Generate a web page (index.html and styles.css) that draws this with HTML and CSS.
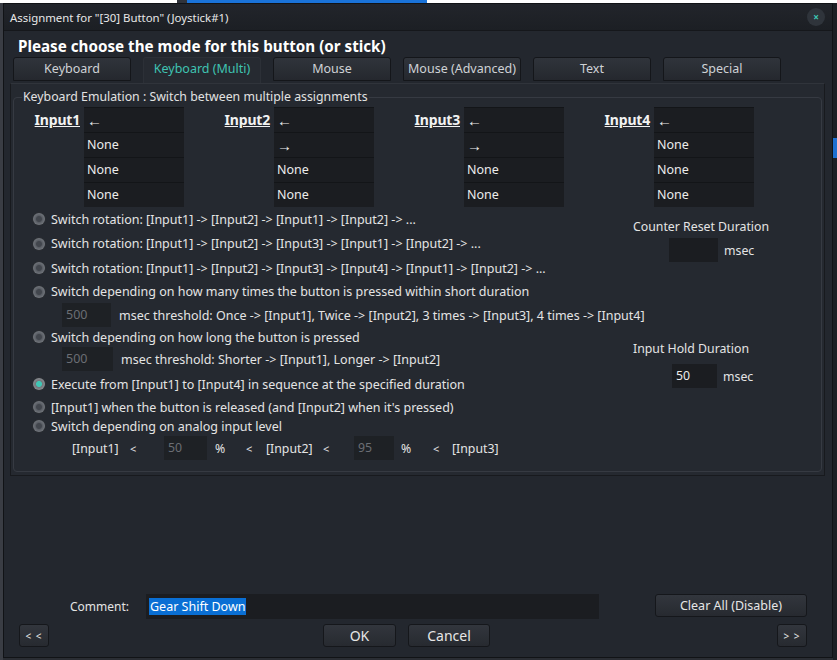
FILE: index.html
```html
<!DOCTYPE html>
<html>
<head>
<meta charset="utf-8">
<title>Assignment</title>
<link rel="stylesheet" href="styles.css">
</head>
<body>
<div class="desk">
  <div class="topstrip"><span class="ts-dark"></span><span class="ts-blue"></span></div>
  <div class="main">
    <div class="leftedge"></div>
    <div class="dialog">
      <div class="titlebar">
        <span class="title">Assignment for "[30] Button" (Joystick#1)</span>
        <span class="close">×</span>
      </div>
      <div class="content">
        <div class="heading">Please choose the mode for this button (or stick)</div>
        <div class="tabs">
          <div class="tab">Keyboard</div>
          <div class="tab active">Keyboard (Multi)</div>
          <div class="tab">Mouse</div>
          <div class="tab">Mouse (Advanced)</div>
          <div class="tab">Text</div>
          <div class="tab">Special</div>
        </div>
        <div class="panel">
          <fieldset class="group">
            <legend>Keyboard Emulation : Switch between multiple assignments</legend>
            <div class="inputs">
              <div class="icol">
                <div class="ilabel">Input1</div>
                <div class="cells"><div class="cell arrow">←</div><div class="cell">None</div><div class="cell">None</div><div class="cell">None</div></div>
              </div>
              <div class="icol">
                <div class="ilabel">Input2</div>
                <div class="cells"><div class="cell arrow">←</div><div class="cell arrow">→</div><div class="cell">None</div><div class="cell">None</div></div>
              </div>
              <div class="icol">
                <div class="ilabel">Input3</div>
                <div class="cells"><div class="cell arrow">←</div><div class="cell arrow">→</div><div class="cell">None</div><div class="cell">None</div></div>
              </div>
              <div class="icol">
                <div class="ilabel">Input4</div>
                <div class="cells"><div class="cell arrow">←</div><div class="cell">None</div><div class="cell">None</div><div class="cell">None</div></div>
              </div>
            </div>
            <div class="options">
              <div class="opt"><span class="radio"></span>Switch rotation: [Input1] -&gt; [Input2] -&gt; [Input1] -&gt; [Input2] -&gt; ...</div>
              <div class="opt"><span class="radio"></span>Switch rotation: [Input1] -&gt; [Input2] -&gt; [Input3] -&gt; [Input1] -&gt; [Input2] -&gt; ...</div>
              <div class="opt"><span class="radio"></span>Switch rotation: [Input1] -&gt; [Input2] -&gt; [Input3] -&gt; [Input4] -&gt; [Input1] -&gt; [Input2] -&gt; ...</div>
              <div class="opt"><span class="radio"></span>Switch depending on how many times the button is pressed within short duration</div>
              <div class="sub wide"><span class="field dis w49">500</span>msec threshold: Once -&gt; [Input1], Twice -&gt; [Input2], 3 times -&gt; [Input3], 4 times -&gt; [Input4]</div>
              <div class="opt"><span class="radio"></span>Switch depending on how long the button is pressed</div>
              <div class="sub"><span class="field dis w51">500</span>msec threshold: Shorter -&gt; [Input1], Longer -&gt; [Input2]</div>
              <div class="opt"><span class="radio on"></span>Execute from [Input1] to [Input4] in sequence at the specified duration</div>
              <div class="opt"><span class="radio"></span>[Input1] when the button is released (and [Input2] when it's pressed)</div>
              <div class="opt"><span class="radio"></span>Switch depending on analog input level</div>
              <div class="analog">
                <span>[Input1]</span><span class="lt">&lt;</span><span class="field dis">50</span><span class="pct">%</span><span class="lt">&lt;</span><span>[Input2]</span><span class="lt">&lt;</span><span class="field dis">95</span><span class="pct">%</span><span class="lt">&lt;</span><span>[Input3]</span>
              </div>
              <div class="side-block counter">
                <div class="slabel">Counter Reset Duration</div>
                <div class="srow"><span class="field w49 m36"></span><span>msec</span></div>
              </div>
              <div class="side-block hold">
                <div class="slabel">Input Hold Duration</div>
                <div class="srow"><span class="field w45 m39">50</span><span>msec</span></div>
              </div>
            </div>
          </fieldset>
        </div>
        <div class="comment-row">
          <span class="clabel">Comment:</span>
          <span class="field comment"><span class="sel">Gear Shift Down</span></span>
          <button class="btn clear">Clear All (Disable)</button>
        </div>
        <div class="button-row">
          <button class="btn nav">&lt; &lt;</button>
          <button class="btn ok">OK</button>
          <button class="btn cancel">Cancel</button>
          <button class="btn nav next">&gt; &gt;</button>
        </div>
      </div>
    </div>
    <div class="side"><div class="side-mark"></div></div>
  </div>
</div>
</body>
</html>
```

FILE: styles.css
```css
* { box-sizing: border-box; }
html, body { margin: 0; padding: 0; }
body {
  width: 837px;
  height: 660px;
  overflow: hidden;
  background: #2a2d33;
  font-family: "Noto Sans", "Open Sans", sans-serif;
  font-size: 12px;
  color: #e4e4e4;
}
.desk { display: flex; flex-direction: column; width: 837px; height: 660px; }
.topstrip { display: flex; height: 3px; background: #ffffff; flex: none; }
.ts-dark { width: 10px; margin-left: 177px; background: #30333a; }
.ts-blue { width: 240px; background: #1a73d9; }
.main { display: flex; flex: 1; min-height: 0; }
.leftedge { width: 3px; background: #3a3d44; flex: none; }
.dialog {
  width: 830px;
  height: 655px;
  flex: none;
  background: #23272e;
  border: 1px solid #111316;
  display: flex;
  flex-direction: column;
}
.side { flex: 1; background: #1c1f24; display: flex; flex-direction: column; }
.side-mark { height: 20px; margin-top: 135px; background: #1e6fd0; }

.titlebar {
  height: 27px;
  flex: none;
  display: flex;
  align-items: center;
  justify-content: space-between;
  background: linear-gradient(#22252b, #1c1f24);
  border-bottom: 1px solid #15171b;
  padding: 0 6px 0 6px;
}
.title { color: #e8e8e8; font-size: 11.4px; }
.close {
  width: 18px;
  height: 18px;
  border-radius: 50%;
  background: #2f343b;
  color: #3cc7b6;
  font-size: 10px;
  line-height: 18px;
  text-align: center;
  font-weight: bold;
  margin-right: 1px;
}

.content { flex: 1; display: flex; flex-direction: column; min-height: 0; }
.heading {
  font-size: 15.2px;
  font-weight: bold;
  color: #ffffff;
  line-height: 20px;
  margin: 5px 0 1px 14px;
}
.tabs { display: flex; gap: 12px; margin-left: 9px; height: 26px; align-items: flex-start; }
.tab {
  width: 118px;
  height: 24px;
  line-height: 22px;
  text-align: center;
  color: #cfd2d6;
  font-size: 12.5px;
  background: linear-gradient(#30343b, #25282e);
  border: 1px solid #14161a;
  border-radius: 3px 3px 0 0;
}
.tab.active {
  height: 26px;
  background: #262a31;
  border-color: #2c3037;
  border-bottom: none;
  color: #3fc3b1;
  line-height: 21px;
}
.panel {
  margin-left: 6px;
  width: 815px;
  height: 393px;
  border: 1px solid #181a1e;
  border-top-color: #30343b;
  padding: 0 2px;
  background: #252930;
}
.group {
  margin: 6px 0 0 0;
  height: 382px;
  border: 1px solid #363a42;
  border-radius: 4px;
  padding: 3px 0 0 20px;
  min-width: 0;
}
.group legend {
  margin-left: -12px;
  padding: 0 1px;
  line-height: 14px;
  font-size: 12.3px;
  color: #e2e2e2;
}
.inputs { display: flex; height: 100px; }
.icol { width: 190px; display: flex; flex: none; }
.ilabel {
  width: 50px;
  padding-right: 4px;
  text-align: right;
  font-weight: bold;
  font-size: 14px;
  text-decoration: underline;
  color: #f2f2f2;
  line-height: 25px;
  letter-spacing: -0.2px;
}
.cells { width: 100px; display: flex; flex-direction: column; }
.cell {
  height: 25px;
  line-height: 24px;
  padding-left: 3px;
  background: #1b1d21;
  border-top: 1px solid #131518;
  color: #ececec;
  font-size: 12.5px;
}
.cell.arrow { font-size: 15px; }

.options {
  display: grid;
  grid-template-columns: 599px 1fr;
  grid-template-rows: 24px 25px 24px 23px 24px 20px 24px 26px 20px 18px 26px;
  font-size: 12.5px;
}
.opt, .sub, .analog { grid-column: 1; display: flex; align-items: center; white-space: nowrap; }
.sub.wide { grid-column: 1 / 3; }
.radio {
  width: 12px;
  height: 12px;
  border-radius: 50%;
  margin: 0 6px 0 -1px;
  flex: none;
  background: radial-gradient(circle, #42464d 0 2.5px, #5a5e65 3.5px, #72767c 6px);
  box-shadow: 0 0 0 1px #2a2d32;
}
.radio.on { background: radial-gradient(circle, #40c6b5 0 2.6px, #727579 3.4px, #8a8d92 6px); }
.sub { padding-left: 28px; }
.field {
  display: inline-block;
  height: 24px;
  line-height: 24px;
  background: #1b1d21;
  padding-left: 4px;
  color: #ececec;
  flex: none;
}
.field.dis { color: #6b6e74; background: #1e2125; }
.sub .field { margin-right: 8px; }
.w49 { width: 49px; }
.w51 { width: 51px; }
.w45 { width: 45px; }
.m36 { margin-left: 36px; }
.m39 { margin-left: 39px; }
.analog { padding-left: 38px; font-size: 12.3px; }
.analog span { flex: none; }
.analog span:nth-child(1) { width: 58px; }
.analog span:nth-child(2) { width: 34px; }
.analog span:nth-child(3) { width: 43px; }
.analog span:nth-child(4) { width: 39px; padding-left: 8px; }
.analog span:nth-child(5) { width: 20px; }
.analog span:nth-child(6) { width: 57px; }
.analog span:nth-child(7) { width: 31px; }
.analog span:nth-child(8) { width: 40px; }
.analog span:nth-child(9) { width: 39px; padding-left: 7px; }
.analog span:nth-child(10) { width: 19px; }
.lt { font-size: 11px; }

.side-block { grid-column: 2; display: flex; flex-direction: column; font-size: 12.3px; }
.counter { grid-row: 1 / 4; padding-top: 12px; }
.hold { grid-row: 6 / 9; padding-top: 14px; }
.slabel { line-height: 16px; height: 16px; }
.srow { display: flex; align-items: center; gap: 6px; margin-top: 3px; }
.hold .srow { margin-top: 7px; }

.comment-row {
  margin-top: auto;
  height: 25px;
  display: flex;
  align-items: center;
  flex: none;
}
.clabel { margin-left: 66px; width: 76px; }
.field.comment { width: 453px; height: 25px; padding-left: 3px; display: flex; align-items: center; font-size: 12.5px; }
.sel { background: #0a6fd4; color: #ffffff; line-height: 17px; padding: 0 1px; }
.btn {
  font-family: inherit;
  font-size: 12.5px;
  color: #e6e6e6;
  height: 23px;
  padding: 0;
  background: linear-gradient(#32363d, #272a30);
  border: 1px solid #15171b;
  border-radius: 3px;
  flex: none;
}
.btn.clear { width: 152px; margin-left: auto; margin-right: 25px; align-self: flex-start; }
.button-row { display: flex; margin: 5px 0 10px 0; flex: none; }
.nav { width: 30px; margin-left: 15px; font-size: 10px; letter-spacing: 1px; }
.nav.next { margin-left: auto; margin-right: 25px; }
.ok { width: 73px; margin-left: 274px; font-size: 14px; }
.cancel { width: 82px; margin-left: 12px; font-size: 14px; }
```
